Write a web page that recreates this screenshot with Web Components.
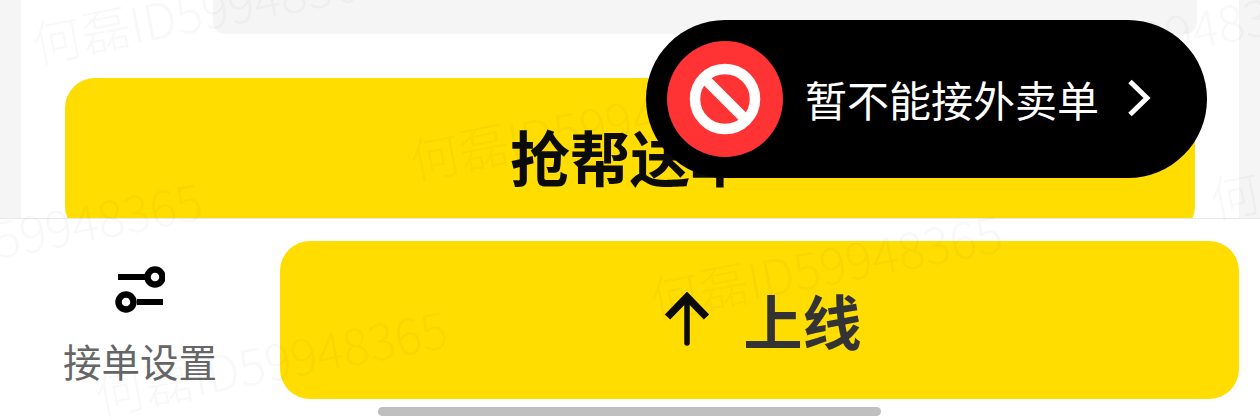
<!DOCTYPE html>
<html lang="zh"><head><meta charset="utf-8"><title>接单</title>
<style>html,body{margin:0;padding:0;background:#f5f5f5}body{width:1260px;height:420px;overflow:hidden;font-family:"Noto Sans CJK SC","Noto Sans",sans-serif}</style>
</head><body>
<rider-page></rider-page>
<script>
const FONT = '"Noto Sans CJK SC","Noto Sans",sans-serif';
class YellowButton extends HTMLElement{
  constructor(){super();this.attachShadow({mode:'open'}).innerHTML=`<style>
  :host{display:flex;align-items:center;justify-content:center;background:#ffdd00;box-sizing:border-box;color:#111;font-family:${FONT};font-weight:700}
  </style><slot></slot>`;}
}
class OrderCard extends HTMLElement{
  constructor(){super();this.attachShadow({mode:'open'}).innerHTML=`<style>
  :host{display:block;height:218px;padding:0 21px;background:#f5f5f5;overflow:hidden;box-sizing:border-box}
  .card{background:#fff;height:218px;display:flex;flex-direction:column;overflow:hidden}
  .top{height:34px;margin:0 42px 44px 192px;background:#f5f5f5;border-radius:0 0 12px 12px;flex:none}
  yellow-button{flex:none;height:158px;margin:0 44px;border-radius:30px;font-size:60px;color:#0b0b0b;font-weight:700;line-height:1;padding-bottom:2px}
  </style><div class="card"><div class="top"></div><yellow-button><slot></slot></yellow-button></div>`;}
}
class SettingsItem extends HTMLElement{
  constructor(){super();this.attachShadow({mode:'open'}).innerHTML=`<style>
  :host{display:flex;flex-direction:column;align-items:center;width:280px;flex:none;font-family:${FONT};color:#666;font-size:38.5px;line-height:46px}
  svg{display:block;margin-top:24px;margin-bottom:22px}
  </style><svg width="50" height="50" viewBox="0 0 50 50" fill="none" stroke="#000" stroke-width="6"><path d="M3 12H32M22 37H48" /><circle cx="40" cy="12" r="7.5" stroke-width="6.5"/><circle cx="11" cy="37" r="7.5" stroke-width="6.5"/></svg><slot></slot>`;}
}
class BottomBar extends HTMLElement{
  constructor(){super();this.attachShadow({mode:'open'}).innerHTML=`<style>
  :host{display:block;background:#fff;border-top:1px solid #e9e8e2;height:202px;box-sizing:border-box;font-family:${FONT}}
  .row{display:flex;padding:22px 21px 0 0;height:158px}
  yellow-button{flex:1;border-radius:30px;font-size:59px;color:#333;gap:34px;padding-left:7px}
  svg{display:block;flex:none;margin-top:-2px}
  .home{width:503px;height:9px;border-radius:5px;background:#bfbfbf;margin:8px 0 0 378px}
  span{line-height:1;margin-top:-2px;margin-left:-1px}
  </style><div class="row"><settings-item>接单设置</settings-item><yellow-button><svg width="46" height="54" viewBox="0 0 46 54" fill="none" stroke="#0a0a0a" stroke-linecap="round"><path d="M23 5V51" stroke-width="5.5"/><path d="M3.5 25L23 5L42.5 25" stroke-width="7.5" stroke-linecap="butt" stroke-linejoin="miter"/></svg><span>上线</span></yellow-button></div><div class="home"></div>`;}
}
class StatusPill extends HTMLElement{
  constructor(){super();this.attachShadow({mode:'open'}).innerHTML=`<style>
  :host{position:absolute;left:646px;top:20px;width:561px;height:158px;border-radius:79px;background:#000;color:#fff;display:flex;align-items:center;box-sizing:border-box;padding-left:21px;font-family:${FONT};font-size:42px;line-height:1;z-index:3}
  svg{display:block;flex:none}
  .label{margin-left:22px;white-space:nowrap}
  .chev{margin-left:28px}
  </style><svg width="116" height="116" viewBox="0 0 116 116"><circle cx="58" cy="58" r="58" fill="#ff3333"/><circle cx="58" cy="58" r="30" fill="none" stroke="#fff" stroke-width="10.5"/><path d="M38 38L78 78" stroke="#fff" stroke-width="10.5"/></svg><span class="label"><slot></slot></span><svg class="chev" width="24" height="38" viewBox="0 0 24 38" fill="none" stroke="#fff" stroke-width="5" style="margin-top:-2px"><path d="M3 2.5L20 19L3 35.5"/></svg>`;}
}
class WaterMark extends HTMLElement{
  constructor(){super();this.attachShadow({mode:'open'}).innerHTML=`<style>
  :host{position:absolute;white-space:nowrap;font-family:${FONT};font-size:49.5px;font-weight:300;line-height:1;color:rgba(40,40,40,.03);transform:rotate(-11deg);transform-origin:0 100%;pointer-events:none;z-index:2}
  </style><slot></slot>`;}
}
class RiderPage extends HTMLElement{
  constructor(){super();this.attachShadow({mode:'open'}).innerHTML=`<style>
  :host{display:block;position:relative;width:1260px;height:420px;overflow:hidden;background:#f5f5f5}
  </style>
  <order-card>抢帮送单</order-card>
  <bottom-bar></bottom-bar>
  <water-mark style="left:37px;top:17px">何磊ID59948365</water-mark>
  <water-mark style="left:415px;top:134px">何磊ID59948365</water-mark>
  <water-mark style="left:-145px;top:241px">何磊ID59948365</water-mark>
  <water-mark style="left:100px;top:369px">何磊ID59948365</water-mark>
  <water-mark style="left:655px;top:273px">何磊ID59948365</water-mark>
  <water-mark style="left:1215px;top:173px">何磊ID59948365</water-mark>
  <water-mark style="left:975px;top:46px">何磊ID59948365</water-mark>
  <status-pill>暂不能接外卖单</status-pill>`;}
}
customElements.define('yellow-button',YellowButton);
customElements.define('order-card',OrderCard);
customElements.define('settings-item',SettingsItem);
customElements.define('bottom-bar',BottomBar);
customElements.define('status-pill',StatusPill);
customElements.define('water-mark',WaterMark);
customElements.define('rider-page',RiderPage);
</script>
</body></html>
